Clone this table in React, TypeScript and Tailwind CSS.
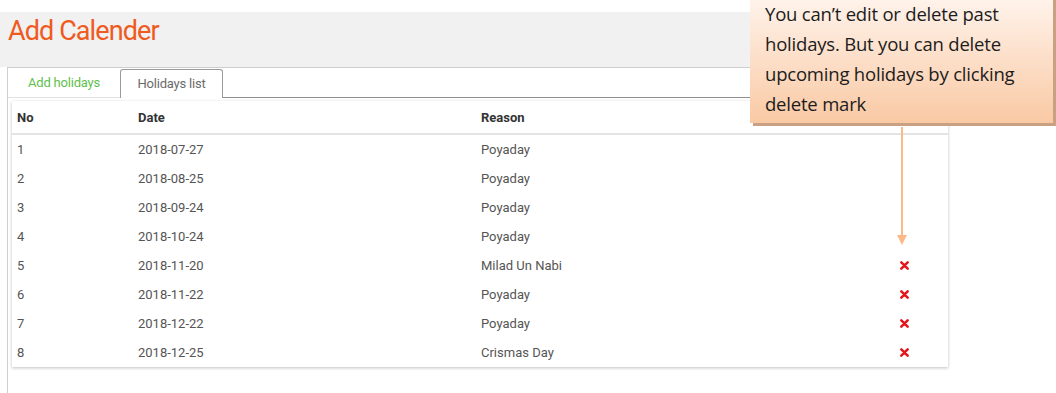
const holidays = [
  { no: 1, date: "2018-07-27", reason: "Poyaday", upcoming: false },
  { no: 2, date: "2018-08-25", reason: "Poyaday", upcoming: false },
  { no: 3, date: "2018-09-24", reason: "Poyaday", upcoming: false },
  { no: 4, date: "2018-10-24", reason: "Poyaday", upcoming: false },
  { no: 5, date: "2018-11-20", reason: "Milad Un Nabi", upcoming: true },
  { no: 6, date: "2018-11-22", reason: "Poyaday", upcoming: true },
  { no: 7, date: "2018-12-22", reason: "Poyaday", upcoming: true },
  { no: 8, date: "2018-12-25", reason: "Crismas Day", upcoming: true },
];

function DeleteMark() {
  return (
    <svg width="9" height="9" viewBox="0 0 10 10">
      <path
        d="M1.5 1.5 L8.5 8.5 M8.5 1.5 L1.5 8.5"
        stroke="#e3161b"
        strokeWidth="2.8"
        strokeLinecap="round"
      />
    </svg>
  );
}

export default function App() {
  return (
    <div className="relative h-[393px] w-[1056px] overflow-hidden bg-white font-['Roboto',sans-serif]">
      {/* HEADER */}
      <div className="h-[12px]" />
      <div className="h-[55px] bg-[#f1f1f1] pl-[8px] pt-[3px]">
        <h1 className="text-[27px] leading-[32px] tracking-[-0.9px] text-[#ef5a1e]">
          Add Calender
        </h1>
      </div>

      {/* PANEL */}
      <div className="ml-[7px] h-[326px] border-l border-t border-[#cfcfcf]">
        {/* TABS */}
        <div className="flex h-[30px] items-end">
          <div className="flex h-[29px] w-[112px] items-center justify-center border-b border-[#e2e2e2] text-[13px] tracking-[-0.2px] text-[#5fbf4f]">
            Add holidays
          </div>
          <div className="flex h-[29px] w-[103px] items-center justify-center rounded-t-[3px] border border-b-0 border-[#9a9a9a] text-[13px] tracking-[-0.2px] text-[#6b6b6b]">
            Holidays list
          </div>
          <div className="h-[29px] w-[725px] border-b border-[#8f8f8f]" />
        </div>

        {/* TABLE */}
        <div className="ml-[4px] mt-[3px] w-[936px] bg-white shadow-[0_1px_3px_rgba(0,0,0,0.25)]">
          <div className="grid h-[34px] grid-cols-[121px_343px_417px_1fr] items-center border-b-2 border-[#e4e4e4] px-[5px] pt-[2px] text-[13px] font-bold text-[#333]">
            <div>No</div>
            <div>Date</div>
            <div>Reason</div>
            <div />
          </div>
          {holidays.map((h) => (
            <div
              key={h.no}
              className="grid h-[29px] grid-cols-[121px_343px_417px_1fr] items-center px-[5px] text-[13px] text-[#555]"
            >
              <div>{h.no}</div>
              <div>{h.date}</div>
              <div>{h.reason}</div>
              <div className="flex pl-[2px]">{h.upcoming && <DeleteMark />}</div>
            </div>
          ))}
        </div>
      </div>

      {/* CALLOUT */}
      <div className="absolute left-[750px] top-[-11px] w-[303px] bg-gradient-to-b from-[#fff6f0] to-[#f9c9a4] pb-[4px] pl-[15px] pr-[4px] pt-[10px] font-['Open_Sans',sans-serif] text-[18.5px] leading-[30px] tracking-[-0.2px] text-[#1c1c1c] shadow-[3px_3px_0_#caa083]">
        You can’t edit or delete past holidays. But you can delete upcoming
        holidays by clicking delete mark
      </div>

      {/* ARROW */}
      <svg
        className="absolute left-[896px] top-[127px]"
        width="12"
        height="120"
        viewBox="0 0 12 120"
      >
        <line x1="6" y1="0" x2="6" y2="110" stroke="#fbb98a" strokeWidth="2" />
        <path d="M1 108 L11 108 L6 118 Z" fill="#fbb98a" />
      </svg>
    </div>
  );
}
